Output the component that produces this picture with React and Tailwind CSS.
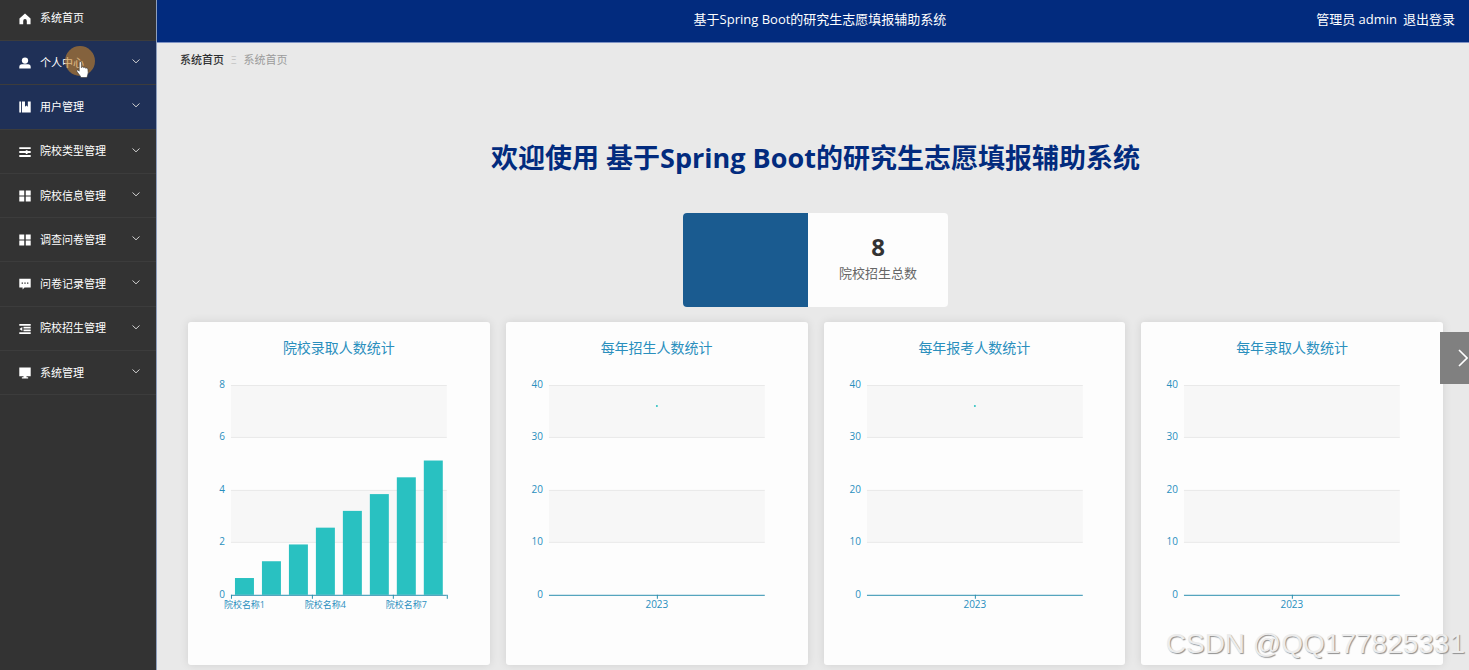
import clsx from 'clsx'

const HomeIcon = () => (
  <path d="M8 .8.6 7.2V15h5v-4.500a2.400 2.400 0 0 1 4.800 0V15h5V7.200z" />
)
const UserIcon = () => (
  <>
    <circle cx="8" cy="4.8" r="4.2" />
    <path d="M.4 15.400v-2.200c0-2 1.400-3.400 3.400-3.400h8.400c2 0 3.400 1.400 3.400 3.400v2.200z" />
  </>
)
const NotebookIcon = () => (
  <path d="M.4.6h2.400v14.800H.4zM4 .6h4v7l1.900-1.500 1.900 1.500v-7h3.800v14.800H4z" />
)
const OperationIcon = () => (
  <path d="M.4 1.500h15.200v2.600H.4zM.4 6.700h8.600v-1.200h2.400v1.200h4.200v2.600h-4.200v1.200H9V9.300H.4zM.4 11.900h15.200v2.600H.4z" />
)
const MenuIcon = () => (
  <path d="M.4.6h6.600v6.600H.4zM9 .6h6.600v6.600H9zM.4 8.800h6.600v6.600H.4zM9 8.800h6.600v6.600H9z" />
)
const CommentIcon = () => (
  <path
    fillRule="evenodd"
    d="M.4 1h15.200v11.600H7.400L4.800 15.400v-2.800H.4zM3.500 6v1.800h1.800V6zM7.100 6v1.800h1.800V6zM10.700 6v1.800h1.800V6z"
  />
)
const FoldIcon = () => (
  <path d="M.4 1.300h15.200v2.400H.4zM6 5h9.600v2.300H6zM6 8.700h9.600V11H6zM.4 12.300h15.200v2.400H.4zM.6 8l3.800-2.800v5.600z" />
)
const MonitorIcon = () => (
  <path d="M.4.8h15.200v11.600H10v1.400h2.200v1.600H3.800v-1.600H6v-1.400H.4z" />
)

const menus = [
  { label: '个人中心', icon: UserIcon, active: true },
  { label: '用户管理', icon: NotebookIcon, active: true },
  { label: '院校类型管理', icon: OperationIcon },
  { label: '院校信息管理', icon: MenuIcon },
  { label: '调查问卷管理', icon: MenuIcon },
  { label: '问卷记录管理', icon: CommentIcon },
  { label: '院校招生管理', icon: FoldIcon },
  { label: '系统管理', icon: MonitorIcon },
]

const charts = [
  {
    title: '院校录取人数统计',
    max: 8,
    bars: [0.64, 1.28, 1.92, 2.56, 3.2, 3.84, 4.48, 5.12],
    labels: [
      { slot: 0, text: '院校名称1' },
      { slot: 3, text: '院校名称4' },
      { slot: 6, text: '院校名称7' },
    ],
  },
  { title: '每年招生人数统计', max: 40, point: 36 },
  { title: '每年报考人数统计', max: 40, point: 36 },
  { title: '每年录取人数统计', max: 40 },
]

const LEFT = 43
const TOP = 15
const WIDTH = 216
const HEIGHT = 210
const BOTTOM = TOP + HEIGHT

const MenuItem = ({ label, icon: Glyph, active }) => (
  <li className="flex">
    <button
      type="button"
      className={clsx(
        'flex w-full items-center border-b border-[#3c3c3c] pl-[19px] pr-4 pt-px text-left',
        active ? 'bg-[#1f3057]' : 'bg-[#333333]'
      )}>
      <svg viewBox="0 0 16 16" className="mr-[9px] size-3 fill-white">
        <Glyph />
      </svg>
      <span className="flex-1">{label}</span>
      <svg
        viewBox="0 0 8 8"
        className="mb-1 size-2 fill-none stroke-[#d0d0d0]">
        <path d="M.5 2.500 4 5.800 7.500 2.500" />
      </svg>
    </button>
  </li>
)

const Chart = ({ max, bars, labels, point }) => {
  const ticks = [4, 3, 2, 1, 0]
  const slot = WIDTH / 8
  const center = LEFT + WIDTH / 2
  return (
    <svg viewBox="0 0 302 295" className="block w-full">
      <rect x={LEFT} y={TOP} width={WIDTH} height="52.5" fill="#f7f7f7" />
      <rect x={LEFT} y={TOP + 105} width={WIDTH} height="52.5" fill="#f7f7f7" />
      {ticks.map((t) => {
        const y = BOTTOM - (t * HEIGHT) / 4
        return (
          <g key={t}>
            {t > 0 && (
              <path d={`M${LEFT} ${Math.floor(y) + 0.5}h${WIDTH}`} stroke="#e9e9e9" />
            )}
            <text
              x={LEFT - 6}
              y={y + 3}
              textAnchor="end"
              className="fill-[#2a8fbd] text-[10px]">
              {(t * max) / 4}
            </text>
          </g>
        )
      })}
      {bars?.map((value, i) => {
        const h = (value / max) * HEIGHT
        return (
          <rect
            key={i}
            x={LEFT + i * slot + 4}
            y={BOTTOM - h}
            width="19"
            height={h}
            fill="#29c1c1"
          />
        )
      })}
      {point && (
        <circle cx={center} cy={BOTTOM - (point / max) * HEIGHT} r="1" fill="#29c1c1" />
      )}
      <path d={`M${LEFT} ${BOTTOM + 0.5}h${WIDTH}`} stroke="#2a8fae" />
      {labels ? (
        <>
          {[0, 3, 6, 8].map((n) => (
            <path
              key={n}
              d={`M${LEFT + n * slot + 0.5} ${BOTTOM}v4`}
              stroke="#2a8fae"
            />
          ))}
          {labels.map((l) => (
            <text
              key={l.text}
              x={LEFT + (l.slot + 0.5) * slot}
              y={BOTTOM + 13}
              textAnchor="middle"
              className="fill-[#2a8fbd] text-[9px]">
              {l.text}
            </text>
          ))}
        </>
      ) : (
        <>
          <path d={`M${center + 0.5} ${BOTTOM}v4`} stroke="#2a8fae" />
          <text
            x={center}
            y={BOTTOM + 13}
            textAnchor="middle"
            className="fill-[#2a8fbd] text-[10px]">
            2023
          </text>
        </>
      )}
    </svg>
  )
}

const ChartCard = ({ title, ...chart }) => (
  <section className="rounded-[3px] bg-[#fdfdfd] pt-4 shadow-[0_0_10px_rgba(0,0,0,0.1)]">
    <h2 className="h-8 text-center text-sm leading-5 text-[#2a8fbd]">{title}</h2>
    <Chart {...chart} />
  </section>
)

const Sidebar = () => (
  <nav className="relative w-[157px] shrink-0 border-r border-[#8e9fbd] bg-[#333333] text-[11px] text-white">
    <a
      href="#home"
      className="flex h-[41px] items-center border-b border-[#3c3c3c] pb-[3px] pl-[19px]">
      <svg viewBox="0 0 16 16" className="mr-[9px] size-3 fill-white">
        <HomeIcon />
      </svg>
      系统首页
    </a>
    <ul className="grid h-[354px] auto-rows-fr">
      {menus.map((m) => (
        <MenuItem key={m.label} {...m} />
      ))}
    </ul>
    {/* click highlight and pointer */}
    <div className="absolute left-[65px] top-[46px] size-[30px] rounded-full bg-[#c8842c]/60" />
    <svg
      viewBox="0 0 14 18"
      className="absolute left-[76px] top-[61px] h-[18px] w-[14px] fill-white stroke-[#333333]">
      <path
        strokeWidth=".6"
        d="M3.200 1.700c0-1.500 2.200-1.500 2.200 0v5l.3-.6c.7-.5 1.600-.2 1.900.5.7-.5 1.700-.2 2 .6 1-.5 2.100 0 2.300 1l.3 3.300c0 2-.9 3-1.200 5H4.900C4.300 14.300 2.200 12.700.9 10.500c-.6-1.200.6-1.900 1.400-1.200l.9.9z"
      />
    </svg>
  </nav>
)

const App = () => (
  <div className="flex min-h-screen overflow-hidden bg-[#e9e9e9] font-['Open_Sans','Noto_Sans_CJK_SC',sans-serif]">
    <Sidebar />
    <div className="relative min-w-0 flex-1">
      <header className="grid h-[43px] grid-cols-[1fr_auto_1fr] items-center border-b border-[#7f93c4] bg-[#022b7e] pb-[3px] pl-7 pr-[14px] text-[13px] text-white">
        <h1 className="col-start-2">基于Spring Boot的研究生志愿填报辅助系统</h1>
        <div className="flex justify-end gap-[6px]">
          <span>管理员 admin</span>
          <button type="button">退出登录</button>
        </div>
      </header>

      <div className="flex h-[34px] items-center gap-[7px] pl-[23px] text-[11px]">
        <a href="#home" className="font-medium text-[#303133]">
          系统首页
        </a>
        <span className="text-[10px] text-[#c4c4c4]">Ξ</span>
        <span className="text-[#9b9b9b]">系统首页</span>
      </div>

      <main className="pb-[5px] pl-[31px] pr-[26px]">
        <p className="pt-[61px] text-center text-[27px] font-bold leading-10 text-[#022b7e]">
          欢迎使用 基于Spring Boot的研究生志愿填报辅助系统
        </p>

        <div className="mx-auto mt-[35px] flex h-[94px] w-[265px] overflow-hidden rounded-[4px] bg-[#fdfdfd]">
          <div className="w-[125px] bg-[#1a5b90]" />
          <div className="flex flex-1 flex-col items-center justify-center pb-[6px]">
            <strong className="text-2xl leading-8 text-[#333333]">8</strong>
            <span className="text-[13px] leading-5 text-[#666666]">院校招生总数</span>
          </div>
        </div>

        <div className="mt-[15px] grid grid-cols-4 gap-4">
          {charts.map((c) => (
            <ChartCard key={c.title} {...c} />
          ))}
        </div>
      </main>

      <button
        type="button"
        aria-label="next"
        className="absolute right-0 top-[332px] flex h-[52px] w-[29px] items-center justify-end bg-[#808080] pr-px">
        <svg viewBox="0 0 10 18" className="h-[18px] w-[10px] fill-none stroke-white">
          <path strokeWidth="1.6" d="M1 1l8 8-8 8" />
        </svg>
      </button>
      <div className="absolute bottom-2 right-1 font-['Liberation_Sans',sans-serif] text-[28px] leading-9 text-[#ececec] [text-shadow:1px_1px_1px_#909090]">
        CSDN @QQ177825331
      </div>
    </div>
  </div>
)

export default App
